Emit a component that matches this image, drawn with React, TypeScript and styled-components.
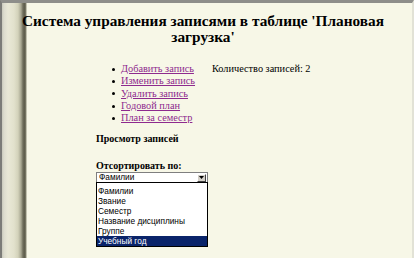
import styled, { createGlobalStyle } from "styled-components";

const GlobalStyle = createGlobalStyle`
    html, body {
        margin: 0;
        padding: 0;
        background: #f7f7e7;
    }
    body {
        font-family: "Liberation Serif", "Times New Roman", serif;
        color: #000;
    }
`;

const menu = ["Добавить запись", "Изменить запись", "Удалить запись", "Годовой план", "План за семестр"];
const sortFields = ["Фамилии", "Звание", "Семестр", "Название дисциплины", "Группе", "Учебный год"];

export default function App() {
    return (
        <>
            <GlobalStyle />
            <Window>
                <Title>Система управления записями в таблице 'Плановая загрузка'</Title>
                <MenuRow>
                    <MenuList>
                        {menu.map((item) => (
                            <MenuItem key={item}>
                                <MenuLink href="#">{item}</MenuLink>
                            </MenuItem>
                        ))}
                    </MenuList>
                    <Count>Количество записей: 2</Count>
                </MenuRow>
                <Section>
                    <SectionTitle>Просмотр записей</SectionTitle>
                    <SortLabel>Отсортировать по:</SortLabel>
                    <Combo>
                        <ComboBox>
                            <ComboValue>Фамилии</ComboValue>
                            <ComboArrow>
                                <svg width="5" height="3" viewBox="0 0 5 3">
                                    <path d="M0 0h5L2.5 3z" fill="#000" />
                                </svg>
                            </ComboArrow>
                        </ComboBox>
                        <ListBox>
                            {sortFields.map((f, i) => (
                                <Option key={f} $selected={i === sortFields.length - 1}>
                                    {f}
                                </Option>
                            ))}
                        </ListBox>
                    </Combo>
                </Section>
            </Window>
        </>
    );
}

const Window = styled.div`
    box-sizing: border-box;
    width: 414px;
    height: 258px;
    overflow: hidden;
    border-top: 3px solid #8e8e8a;
    border-left: 2px solid #7c7c78;
    border-right: 2px solid #e2e2d6;
    padding: 10px 20px 0 12px;
    font-family: "Liberation Serif", "Times New Roman", serif;
    background:
        linear-gradient(
            to right,
            #c9c9bc 0,
            #dddcce 2px,
            #e9e8d6 6px,
            #e2e1cc 12px,
            #d3d2ba 16px,
            #a9a893 19px,
            #6e6d5b 21px,
            #5c5b4b 23px,
            #8d8c78 24px,
            #f7f7e7 25px
        ) repeat-y,
        #f7f7e7;
`;

const Title = styled.h1`
    margin: 0;
    font-family: "Liberation Serif", "Times New Roman", serif;
    font-size: 15.3px;
    line-height: 16px;
    font-weight: bold;
    text-align: center;
`;

const MenuRow = styled.div`
    display: flex;
    align-items: flex-start;
    margin: 18px 0 0 98px;
    font-size: 10.3px;
    line-height: 12.3px;
`;

const MenuList = styled.ul`
    margin: 0;
    padding: 0;
    list-style: none;
    width: 100px;
`;

const MenuItem = styled.li`
    display: flex;
    align-items: center;
    gap: 6px;

    &::before {
        content: "";
        width: 3px;
        height: 3px;
        border-radius: 50%;
        background: #000;
        flex: none;
    }
`;

const MenuLink = styled.a`
    color: #8e2a8e;
    text-decoration: underline;
`;

const Count = styled.span``;

const Section = styled.div`
    margin: 9px 0 0 82px;
    font-size: 10px;
    line-height: 12px;
`;

const SectionTitle = styled.div`
    font-weight: bold;
`;

const SortLabel = styled.div`
    font-weight: bold;
    margin-top: 15px;
`;

const Combo = styled.div`
    width: 112px;
    font-family: "Liberation Sans", Arial, sans-serif;
    font-size: 8.3px;
`;

const ComboBox = styled.div`
    box-sizing: border-box;
    display: flex;
    align-items: center;
    height: 10px;
    border: 1px solid #7f7f7f;
    border-bottom: none;
    background: #fff;
`;

const ComboValue = styled.span`
    flex: 1;
    padding-left: 2px;
    line-height: 9px;
`;

const ComboArrow = styled.span`
    box-sizing: border-box;
    display: flex;
    align-items: center;
    justify-content: center;
    width: 9px;
    height: 8px;
    margin-right: 1px;
    background: #d4d0c8;
    border: 1px solid;
    border-color: #fff #404040 #404040 #fff;
`;

const ListBox = styled.div`
    box-sizing: border-box;
    border: 1px solid #000;
    background: #fff;
    padding: 3px 0 0;
    height: 65px;
`;

const Option = styled.div<{ $selected?: boolean }>`
    height: 10px;
    line-height: 10px;
    padding-left: 1px;
    white-space: nowrap;
    color: ${(p) => (p.$selected ? "#fff" : "#000")};
    background: ${(p) => (p.$selected ? "#0a246a" : "transparent")};
`;
